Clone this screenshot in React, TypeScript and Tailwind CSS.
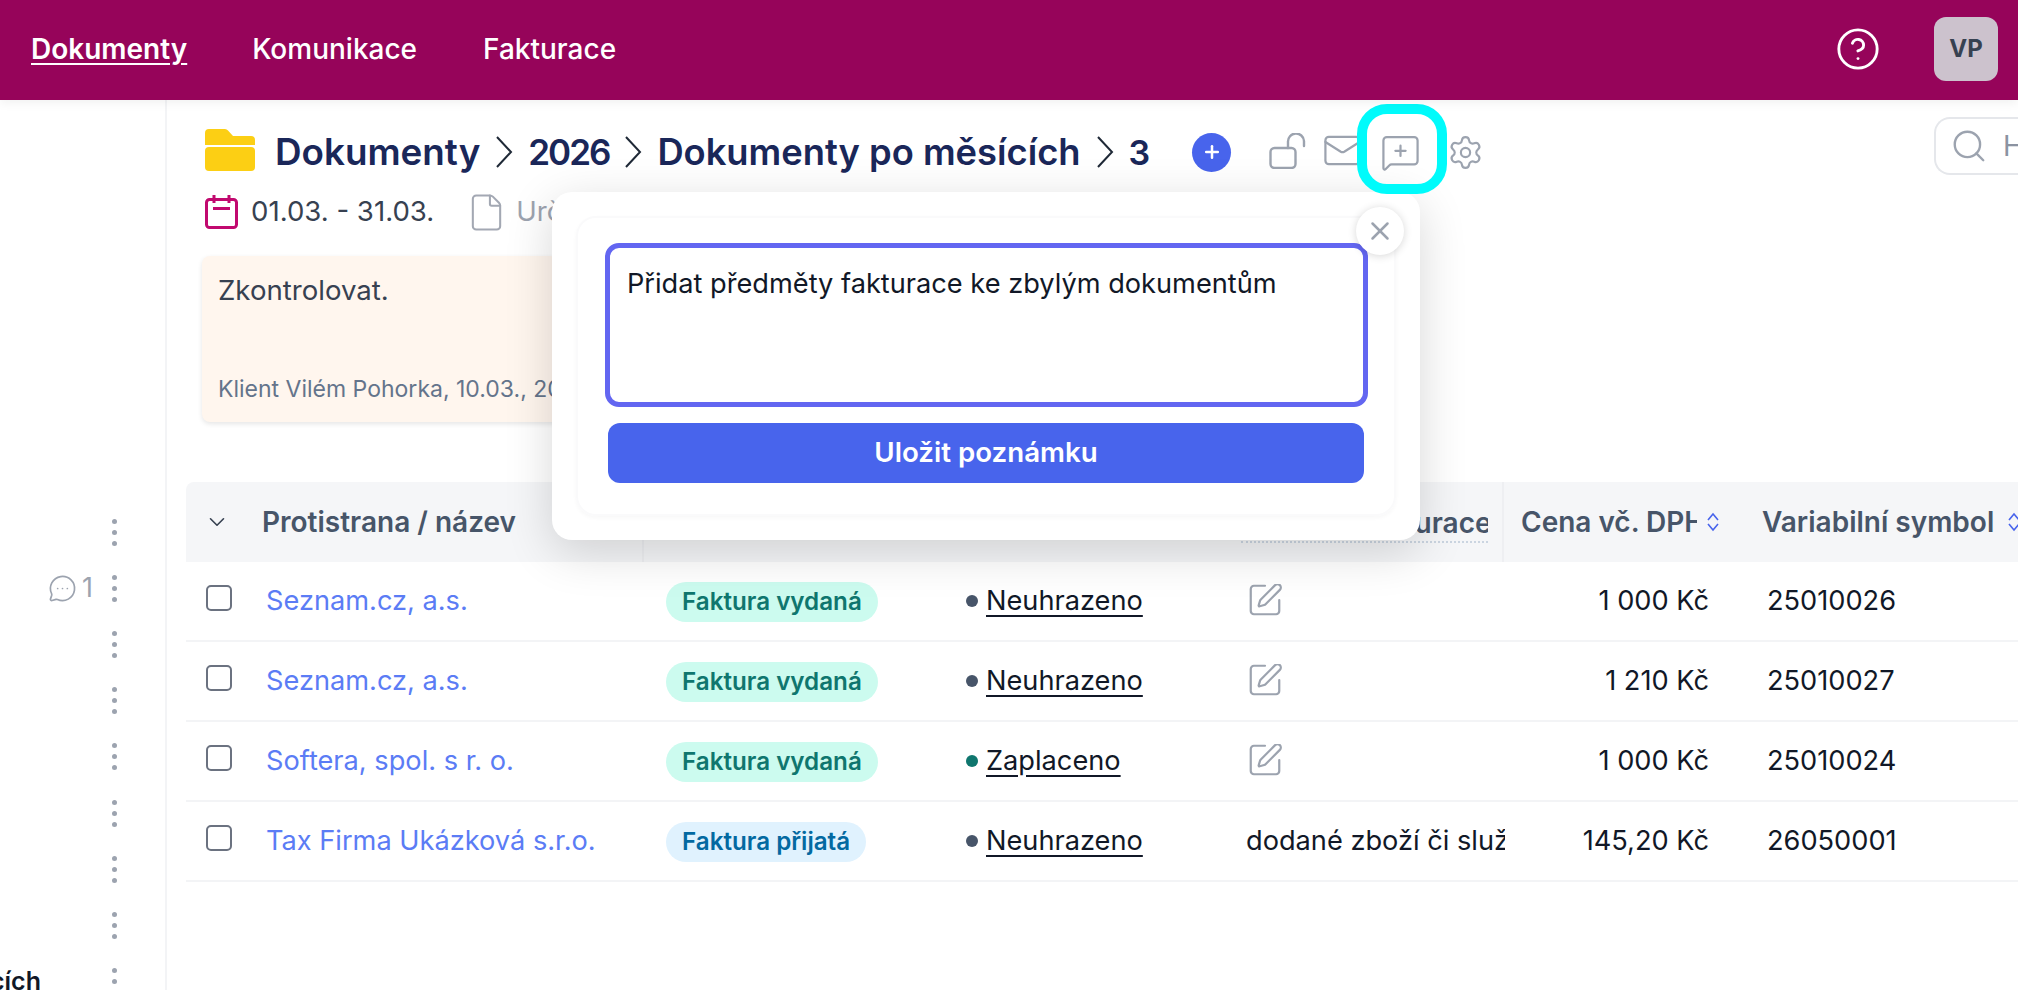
import { ChevronDown, CircleHelp, File, Mail, MessageCircleMore, MessageSquarePlus, Plus, Search, Settings, SquarePen, X } from "lucide-react";

const rows = [
  { name: "Seznam.cz, a.s.", type: "Faktura vydaná", status: "Neuhrazeno", note: "", price: "1 000 Kč", vs: "25010026" },
  { name: "Seznam.cz, a.s.", type: "Faktura vydaná", status: "Neuhrazeno", note: "", price: "1 210 Kč", vs: "25010027" },
  { name: "Softera, spol. s r. o.", type: "Faktura vydaná", status: "Zaplaceno", note: "", price: "1 000 Kč", vs: "25010024" },
  { name: "Tax Firma Ukázková s.r.o.", type: "Faktura přijatá", status: "Neuhrazeno", note: "dodané zboží či služby", price: "145,20 Kč", vs: "26050001" },
];

function Dots() {
  return (
    <div className="flex flex-col gap-[6px]">
      <span className="w-[5px] h-[5px] rounded-full bg-[#9ca3af]"></span>
      <span className="w-[5px] h-[5px] rounded-full bg-[#9ca3af]"></span>
      <span className="w-[5px] h-[5px] rounded-full bg-[#9ca3af]"></span>
    </div>
  );
}

function Sidebar() {
  const items = [0, 1, 2, 3, 4, 5, 6, 7, 8];
  return (
    <aside className="w-[167px] shrink-0 border-r-2 border-[#f3f4f6] pt-[404px] overflow-hidden">
      {items.map((i) => (
        <div key={i} className="h-[56.2px] flex items-center pr-[50px] relative">
          <div className="w-[112px] flex items-center justify-end pr-[19px] overflow-hidden shrink-0">
            {i === 1 && (
              <div className="flex items-center gap-[5px] text-[#9ca3af] text-[27px]">
                <MessageCircleMore className="w-[29px] h-[29px]" strokeWidth={1.4} />
                <span>1</span>
              </div>
            )}
            {i === 8 && (
              <div className="w-[112px] pr-[52px] flex justify-end overflow-hidden">
                <span className="whitespace-nowrap text-[25px] font-semibold text-[#111827]">Dokumenty po měsících</span>
              </div>
            )}
          </div>
          <Dots />
        </div>
      ))}
    </aside>
  );
}

function Folder() {
  return (
    <svg viewBox="0 0 50 42" className="w-[50px] h-[42px] shrink-0 self-start">
      <path d="M0 16V4a4 4 0 0 1 4-4h16a4 4 0 0 1 3 1.5L28 7h18a4 4 0 0 1 4 4v5z" fill="#fccf14" />
      <path d="M0 22a4 4 0 0 1 4-4h42a4 4 0 0 1 4 4v16a4 4 0 0 1-4 4H4a4 4 0 0 1-4-4z" fill="#fccf14" />
    </svg>
  );
}

function Crumb() {
  return (
    <svg viewBox="0 0 18 32" fill="none" stroke="#1f2937" strokeWidth="2" className="mx-[15px] w-[18px] h-[32px] shrink-0">
      <path d="M2 1l14 15L2 31" />
    </svg>
  );
}

function Sort() {
  return (
    <svg viewBox="0 0 12 20" fill="none" stroke="#4864ec" strokeWidth="1.6" className="w-[12px] h-[20px] shrink-0">
      <path d="M1 8l5-6 5 6M1 12l5 6 5-6" />
    </svg>
  );
}

function Breadcrumb() {
  return (
    <div className="flex items-center h-[46px]">
      <Folder />
      <span className="ml-[20px] text-[36.8px] font-semibold text-[#1a2759] whitespace-nowrap">Dokumenty</span>
      <Crumb />
      <span className="text-[35px] font-semibold tracking-[-2px] text-[#1a2759]">2026</span>
      <Crumb />
      <span className="text-[36.3px] font-semibold text-[#1a2759] whitespace-nowrap">Dokumenty po měsících</span>
      <Crumb />
      <span className="text-[34px] font-semibold text-[#1a2759]">3</span>
      <button className="ml-[42px] w-[39px] h-[39px] rounded-full bg-[#4864ec] flex items-center justify-center shrink-0">
        <Plus className="w-[20px] h-[20px] text-white" strokeWidth={3} />
      </button>
      <svg viewBox="0 0 37 36" fill="none" stroke="#9ca3af" strokeWidth="2.4" className="ml-[38px] w-[37px] h-[36px] shrink-0 -mt-[3px]">
        <rect x="1.5" y="15" width="25" height="20" rx="4" />
        <path d="M19 15V9a8 8 0 0 1 16-1v5" strokeLinecap="round" />
      </svg>
      <Mail className="ml-[16px] w-[41px] h-[41px] text-[#9ca3af] shrink-0 -mt-[3px]" strokeWidth={1.3} />
      <MessageSquarePlus className="ml-[17px] w-[41px] h-[41px] text-[#9ca3af] shrink-0" strokeWidth={1.3} />
      <Settings className="ml-[26px] w-[37px] h-[37px] text-[#9ca3af] shrink-0" strokeWidth={1.4} />
    </div>
  );
}

function Popup() {
  return (
    <div className="absolute left-[385px] top-[92px] w-[868px] h-[348px] bg-white rounded-[20px] shadow-[0_12px_48px_rgba(0,0,0,0.16)] p-[24px]">
      <div className="h-[300px] rounded-[20px] border-2 border-[#fafafb] shadow-[0_2px_4px_rgba(0,0,0,0.03)] pl-[27px] pr-[26px] pt-[25px]">
        <div className="h-[164px] rounded-[14px] border-[5px] border-[#6366f1] px-[17px] pt-[21px] text-[27.2px] leading-[30px] text-[#111827]">
          Přidat předměty fakturace ke zbylým dokumentům
        </div>
        <button className="mt-[16px] ml-[3px] w-[756px] h-[60px] rounded-[12px] bg-[#4864ec] text-white text-[27.7px] font-semibold">
          Uložit poznámku
        </button>
      </div>
      <button className="absolute left-[804px] top-[15px] w-[48px] h-[48px] rounded-full bg-white shadow-[0_1px_8px_rgba(0,0,0,0.16)] flex items-center justify-center">
        <X className="w-[30px] h-[30px] text-[#9ca3af]" strokeWidth={2} />
      </button>
    </div>
  );
}

function Table() {
  return (
    <div className="mt-[60px] ml-[19px] w-[1901px]">
      <div className="h-[80px] flex items-center bg-[#f5f6f8] rounded-t-[8px] text-[28px] font-semibold text-[#475569]">
        <div className="w-[76px] pl-[18px] shrink-0">
          <ChevronDown className="w-[26px] h-[26px] text-[#374151]" strokeWidth={1.5} />
        </div>
        <div className="w-[382px] shrink-0 border-r-2 border-[#eeeff2] h-full flex items-center whitespace-nowrap">Protistrana / název</div>
        <div className="w-[597px] shrink-0 h-full"></div>
        <div className="w-[263px] shrink-0 h-full flex items-center border-r-2 border-[#eeeff2]">
          <span className="w-[247px] overflow-hidden whitespace-nowrap border-b-2 border-dotted border-[#cbd5e1] leading-[36px] translate-y-[2px]">Předmět fakturace</span>
        </div>
        <div className="w-[258px] shrink-0 pl-[17px] flex items-center">
          <span className="w-[176px] overflow-hidden whitespace-nowrap">Cena vč. DPH</span>
          <span className="ml-[10px]"><Sort /></span>
        </div>
        <div className="flex items-center whitespace-nowrap">
          Variabilní symbol
          <span className="ml-[14px]"><Sort /></span>
        </div>
      </div>
      {rows.map((r, i) => (
        <div key={i} className="h-[80px] flex items-center border-b-2 border-[#f3f4f6] text-[27.2px]">
          <div className="w-[80px] pl-[20px] shrink-0">
            <div className="w-[26px] h-[26px] rounded-[5px] border-2 border-[#6b7280] -mt-[6px]"></div>
          </div>
          <div className="w-[400px] shrink-0 text-[#5b7cf5] whitespace-nowrap">{r.name}</div>
          <div className="w-[300px] shrink-0">
            <span className={`inline-block h-[40px] leading-[40px] px-[16px] rounded-full text-[24.2px] font-semibold whitespace-nowrap ${r.type === "Faktura vydaná" ? "bg-[#ccfbef] text-[#0f766e]" : "bg-[#e0f2fe] text-[#0369a1]"}`}>
              {r.type}
            </span>
          </div>
          <div className="w-[280px] shrink-0 flex items-center gap-[8px]">
            <span className={`w-[12px] h-[12px] rounded-full ${r.status === "Zaplaceno" ? "bg-[#0f766e]" : "bg-[#475569]"}`}></span>
            <span className="underline underline-offset-[5px] text-[#111827]">{r.status}</span>
          </div>
          <div className="w-[259px] shrink-0 overflow-hidden whitespace-nowrap text-[#111827]">
            {r.note ? r.note : <SquarePen className="w-[38px] h-[38px] text-[#9ca3af] -mt-[3px]" strokeWidth={1.4} />}
          </div>
          <div className="w-[204px] shrink-0 text-right text-[#111827] whitespace-nowrap">{r.price}</div>
          <div className="pl-[58px] text-[#111827]">{r.vs}</div>
        </div>
      ))}
    </div>
  );
}

export default function App() {
  return (
    <div className="w-[2018px] h-[990px] overflow-hidden flex flex-col bg-white font-['Inter',sans-serif]">
      <header className="h-[100px] shrink-0 bg-[#96045a] flex items-center pl-[31px] pr-[20px] text-white text-[28px] font-medium relative z-10 shadow-[0_3px_10px_rgba(0,0,0,0.06)]">
        <a className="font-semibold underline underline-offset-4 -mt-[2px]">Dokumenty</a>
        <a className="ml-[65px] -mt-[2px]">Komunikace</a>
        <a className="ml-[66px] -mt-[2px]">Fakturace</a>
        <CircleHelp className="ml-auto w-[46px] h-[46px] -mt-[2px]" strokeWidth={1.5} />
        <div className="ml-[53px] w-[64px] h-[64px] rounded-[12px] bg-[#ccc2cd] flex items-center justify-center text-[#374151] text-[24px] font-bold -mt-[2px]">VP</div>
      </header>
      <div className="flex-1 flex min-h-0">
        <Sidebar />
        <main className="flex-1 relative min-w-0 overflow-hidden">
          <div className="pt-[29px] pl-[38px]">
            <Breadcrumb />
            <div className="mt-[20px] h-[34px] flex items-center text-[27.6px]">
              <svg viewBox="0 0 33 34" fill="none" stroke="#c1096f" strokeWidth="3" className="w-[33px] h-[34px] shrink-0">
                <rect x="1.5" y="4.5" width="30" height="28" rx="3" />
                <path d="M9 0v8M24 0v8M8 13.5h17" />
              </svg>
              <span className="ml-[13px] text-[#374151] whitespace-nowrap">01.03. - 31.03.</span>
              <File className="ml-[32px] w-[41px] h-[41px] text-[#a3a8b3] shrink-0" strokeWidth={1.2} />
              <span className="ml-[9px] text-[#9ca3af]">Určeno</span>
            </div>
            <div className="mt-[27px] -ml-[3px] w-[1000px] h-[166px] rounded-[8px] bg-[#fff6ee] shadow-[0_2px_5px_rgba(0,0,0,0.1)] px-[16px] pt-[14px] flex flex-col justify-between pb-[16px]">
              <p className="text-[27.6px] text-[#374151]">Zkontrolovat.</p>
              <p className="text-[23px] text-[#64748b]">Klient Vilém Pohorka, 10.03., 2026</p>
            </div>
          </div>
          <Table />
          <Popup />
          <div className="absolute left-[1190px] top-[4px] w-[90px] h-[90px] rounded-[30px] border-[10px] border-[#00fbfb]"></div>
          <div className="absolute left-[1767px] top-[17px] w-[120px] h-[58px] rounded-l-[16px] border-2 border-r-0 border-[#e5e7eb] flex items-center pl-[14px] text-[#8b93a1] text-[28px]">
            <Search className="w-[38px] h-[38px] text-[#9ca3af] shrink-0" strokeWidth={1.5} />
            <span className="ml-[15px]">Hledat</span>
          </div>
        </main>
      </div>
    </div>
  );
}
